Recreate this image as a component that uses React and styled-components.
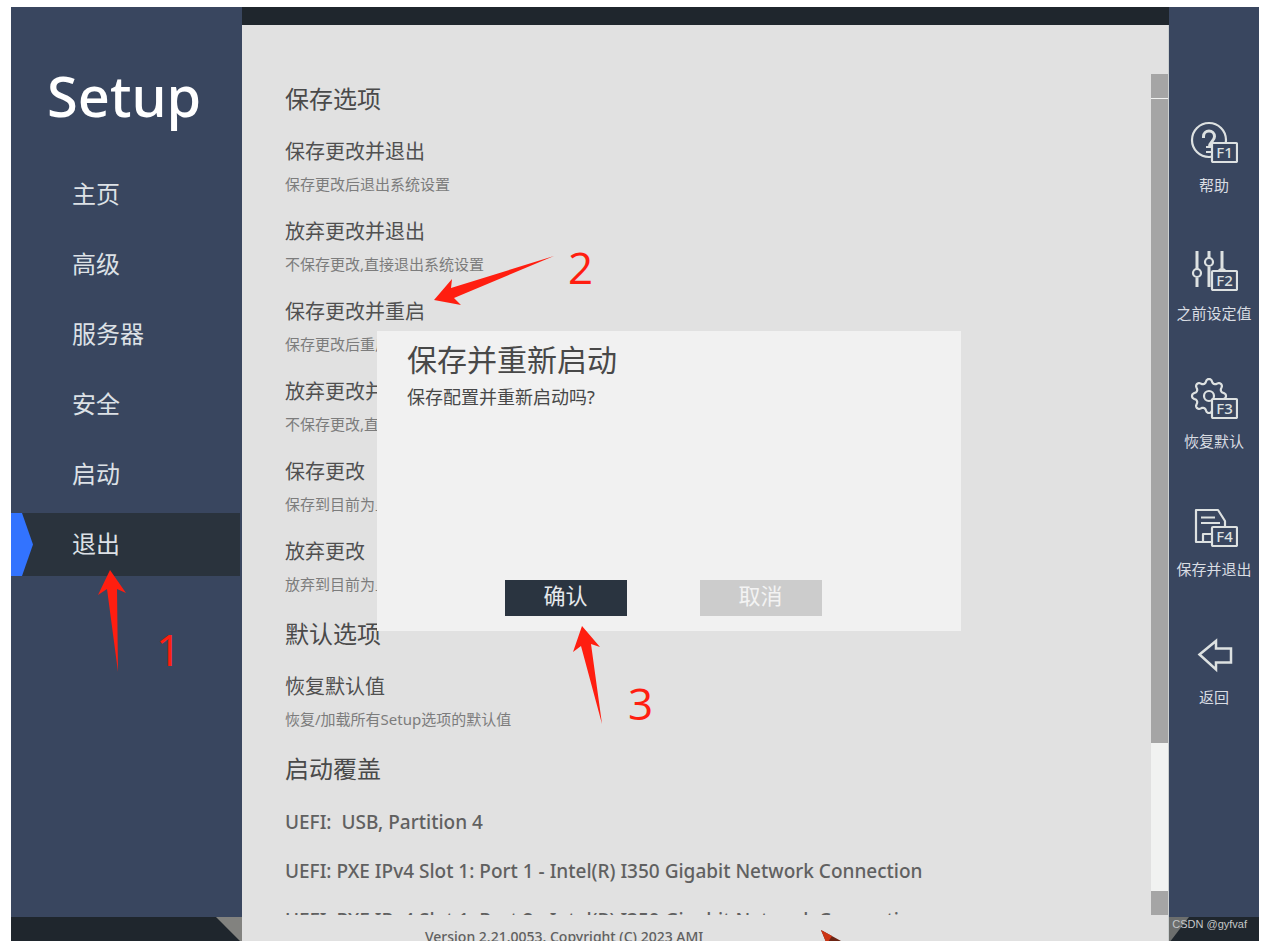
import React, { useState } from "react";
import styled, { createGlobalStyle } from "styled-components";

const GlobalStyle = createGlobalStyle`
  * {
    box-sizing: border-box;
  }
  body {
    margin: 0;
    background-color: white;
    font-family: "Noto Sans", "Noto Sans CJK SC", sans-serif;
    overflow: hidden;
  }
  button {
    border: none;
    padding: 0;
    background: none;
    font-family: inherit;
    cursor: pointer;
  }
`;

const Container = styled.div`
  height: 100vh;
  padding: 7px 4px 0 11px;
`;
const Screen = styled.div`
  position: relative;
  height: 100%;
  display: grid;
  grid-template-columns: 231px 1fr 90px;
  background-color: #1f262d;
`;

/* columns */
const Side = styled.div`
  display: flex;
  flex-direction: column;
  min-height: 0;
`;
const SidePanel = styled.div`
  flex: 1;
  background-color: #39465f;
`;
const SideFoot = styled.div`
  height: 24px;
  display: flex;
  justify-content: ${(props) => (props.$right ? "flex-start" : "flex-end")};
`;
const Fold = styled.div`
  width: ${(props) => (props.$right ? "20px" : "26px")};
  background-color: ${(props) => (props.$right ? "#6c6e6d" : "#82827f")};
  clip-path: ${(props) =>
    props.$right
      ? "polygon(0 0, 100% 0, 8% 100%, 0 100%)"
      : "polygon(0 0, 100% 0, 100% 100%, 92% 100%)"};
`;

/* left menu */
const Title = styled.h1`
  margin: 0;
  padding: 52px 0 0 36px;
  height: 156px;
  font-size: 56px;
  line-height: 72px;
  font-weight: 500;
  color: white;
`;
const Nav = styled.nav`
  display: flex;
  flex-direction: column;
  gap: 7px;
  padding-right: 2px;
`;
const NavLink = styled.a`
  height: 63px;
  display: flex;
  align-items: center;
  font-size: 24px;
  line-height: 60px;
  text-decoration: none;
  color: #dde1e6;
  background-color: ${(props) => (props.$active ? "#2a333d" : "transparent")};
  padding-bottom: 2px;
  &::before {
    content: "";
    width: 22px;
    height: 63px;
    margin: 0 39px -2px 0;
    background-color: ${(props) => (props.$active ? "#3273ff" : "transparent")};
    clip-path: polygon(0 0, 50% 0, 100% 50%, 50% 100%, 0 100%);
  }
`;

/* middle */
const Main = styled.main`
  position: relative;
  display: flex;
  flex-direction: column;
  min-width: 0;
  min-height: 0;
`;
const Panel = styled.div`
  flex: 1;
  min-height: 0;
  display: flex;
  flex-direction: column;
  margin-top: 18px;
  padding-top: 49px;
  background-color: #e1e1e1;
  border-right: 1px solid #ccd0d0;
`;
const Scroller = styled.div`
  flex: 1;
  min-height: 0;
  display: flex;
`;
const List = styled.div`
  flex: 1;
  overflow: hidden;
  padding: 7px 20px 0 43px;
`;
const Section = styled.section`
  margin-bottom: 22px;
`;
const Heading = styled.h2`
  margin: 0 0 21px;
  font-size: 24px;
  line-height: 36px;
  font-weight: 400;
  color: #4a4a4a;
`;
const Options = styled.div`
  display: flex;
  flex-direction: column;
  gap: ${(props) => (props.$compact ? "21px" : "24px")};
`;
const Option = styled.div`
  display: flex;
  flex-direction: column;
  align-items: flex-start;
  gap: 8px;
`;
const OptionButton = styled.button`
  font-size: ${(props) => (props.$latin ? "19px" : "20px")};
  font-weight: ${(props) => (props.$latin ? 500 : 400)};
  line-height: 28px;
  white-space: pre;
  color: ${(props) => (props.$latin ? "#606060" : "#505050")};
`;
const Hint = styled.p`
  margin: 0;
  font-size: 15px;
  line-height: 20px;
  color: #7c7c7c;
`;
const ScrollBar = styled.div`
  width: 17px;
  display: flex;
  flex-direction: column;
  background-color: #f1f2f1;
`;
const ScrollEnd = styled.div`
  height: 24px;
  background-color: #a5a5a5;
`;
const Thumb = styled.div`
  flex: 644;
  margin-top: 1px;
  background-color: #a5a5a5;
`;
const Track = styled.div`
  flex: 148;
`;
const Version = styled.footer`
  height: 26px;
  overflow: hidden;
  display: flex;
  gap: 118px;
  padding: 12px 0 0 183px;
  font-size: 14px;
  font-weight: 500;
  line-height: 20px;
  color: #606060;
`;
const Pointer = styled.svg`
  flex: none;
  width: 20px;
  height: 12px;
  margin-top: 3px;
`;

/* dialog */
const Dialog = styled.div`
  position: absolute;
  top: 324px;
  left: 135px;
  width: 63%;
  height: 300px;
  display: flex;
  flex-direction: column;
  padding: 8px 30px 15px;
  background-color: #f1f1f1;
`;
const DialogTitle = styled.h2`
  margin: 0;
  font-size: 30px;
  line-height: 42px;
  font-weight: 400;
  color: #484848;
`;
const DialogText = styled.p`
  flex: 1;
  margin: 2px 0 0;
  font-size: 18px;
  line-height: 28px;
  color: #484848;
`;
const Actions = styled.div`
  display: flex;
  justify-content: center;
  gap: 73px;
  padding-right: 12px;
`;
const ActionButton = styled.button`
  width: 122px;
  height: 36px;
  padding-bottom: 6px;
  font-size: 22px;
  line-height: 30px;
  color: ${(props) => (props.$primary ? "#e6e9ec" : "#f3f3f3")};
  background-color: ${(props) => (props.$primary ? "#2a3440" : "#cccccc")};
`;

/* right keys */
const Keys = styled.div`
  display: flex;
  flex-direction: column;
  gap: 64px;
  padding-top: 114px;
`;
const Key = styled.button`
  height: 64px;
  display: flex;
  flex-direction: column;
  align-items: center;
  gap: 12px;
  font-size: 15px;
  line-height: 20px;
  color: #d9dde3;
  white-space: nowrap;
`;
const Icon = styled.svg`
  flex: none;
  width: 48px;
  height: 42px;
  fill: none;
  stroke: #dde1e1;
  stroke-width: 2.2;
  stroke-linejoin: round;
`;
const BadgeText = styled.text`
  font-size: 15px;
  font-weight: 500;
  fill: #dde1e1;
  stroke: none;
`;
const Watermark = styled.span`
  position: absolute;
  right: 12px;
  bottom: 8px;
  font-family: "Liberation Sans", sans-serif;
  font-size: 11px;
  line-height: 18px;
  color: #c4c6c8;
`;

/* red marks drawn over the screen */
const Arrow = styled.svg`
  position: absolute;
  left: ${(props) => props.$x}px;
  top: ${(props) => props.$y}px;
  fill: #ff1e10;
  pointer-events: none;
`;
const Step = styled.span`
  position: absolute;
  left: ${(props) => props.$x}px;
  top: ${(props) => props.$y}px;
  font-family: "Open Sans", sans-serif;
  font-size: 44px;
  font-weight: 500;
  line-height: 48px;
  color: #ff1e10;
  pointer-events: none;
`;

const menu = ["主页", "高级", "服务器", "安全", "启动", "退出"];

const sections = [
  {
    title: "保存选项",
    options: [
      { name: "保存更改并退出", hint: "保存更改后退出系统设置" },
      { name: "放弃更改并退出", hint: "不保存更改,直接退出系统设置" },
      { name: "保存更改并重启", hint: "保存更改后重启系统" },
      { name: "放弃更改并重启", hint: "不保存更改,直接重启系统" },
      { name: "保存更改", hint: "保存到目前为止的更改" },
      { name: "放弃更改", hint: "放弃到目前为止的更改" },
    ],
  },
  {
    title: "默认选项",
    options: [{ name: "恢复默认值", hint: "恢复/加载所有Setup选项的默认值" }],
  },
  {
    title: "启动覆盖",
    latin: true,
    options: [
      { name: "UEFI:  USB, Partition 4" },
      {
        name: "UEFI: PXE IPv4 Slot 1: Port 1 - Intel(R) I350 Gigabit Network Connection",
      },
      {
        name: "UEFI: PXE IPv4 Slot 1: Port 2 - Intel(R) I350 Gigabit Network Connection",
      },
    ],
  },
];

// eight round teeth, one of them at the top
const gearPath = () => {
  let d = "";
  for (let i = 0; i < 96; i++) {
    const a = (i / 96) * Math.PI * 2;
    const wave = Math.cos(a * 8);
    const r = 15 + 2 * Math.sign(wave) * Math.pow(Math.abs(wave), 0.6);
    const x = 19 + r * Math.sin(a);
    const y = 19 - r * Math.cos(a);
    d += `${i ? "L" : "M"}${x.toFixed(2)} ${y.toFixed(2)}`;
  }
  return d + "Z";
};

const Badge = ({ label }) => (
  <>
    <rect x="22" y="22" width="25" height="19" rx="1" fill="#39465f" />
    <BadgeText x="34.5" y="37" textAnchor="middle">
      {label}
    </BadgeText>
  </>
);

const keys = [
  {
    name: "帮助",
    badge: "F1",
    icon: (
      <>
        <circle cx="19" cy="19" r="17" />
        <path
          d="M13.5 17v-1.500a5.500 5.500 0 0 1 11 0c0 5-5 4.500-5 10.500"
          strokeWidth="3"
        />
        <path d="M16 26h6M16 31h6" />
      </>
    ),
  },
  {
    name: "之前设定值",
    badge: "F2",
    icon: (
      <>
        <path d="M7 2v18M7 29v9M32 2v17" strokeWidth="3" />
        <path d="M19 2v7M19 18v20" strokeWidth="3" />
        <circle cx="7" cy="24" r="4" />
        <circle cx="19" cy="13" r="4" />
        <circle cx="32" cy="24" r="4" />
      </>
    ),
  },
  {
    name: "恢复默认",
    badge: "F3",
    icon: (
      <>
        <path d={gearPath()} />
        <circle cx="19" cy="19" r="5" />
      </>
    ),
  },
  {
    name: "保存并退出",
    badge: "F4",
    icon: (
      <>
        <path d="M6 5h22l7 11v21H6zM13 37v-8h12" />
        <path d="M11 12.500h14M11 18h19" />
      </>
    ),
  },
  {
    name: "返回",
    icon: (
      <path
        d="M9.500 21.500L26 8v7.500h15v14H26v7z"
        strokeWidth="2.500"
        strokeLinejoin="miter"
      />
    ),
  },
];

export default function App() {
  const [active, setActive] = useState("退出");
  const [open, setOpen] = useState(true);
  const handleClose = () => setOpen(false);
  return (
    <>
      <GlobalStyle />
      <Container>
        <Screen>
          <Side>
            <SidePanel>
              <Title>Setup</Title>
              <Nav>
                {menu.map((item) => (
                  <NavLink
                    key={item}
                    href="#"
                    $active={item === active}
                    onClick={() => setActive(item)}
                  >
                    {item}
                  </NavLink>
                ))}
              </Nav>
            </SidePanel>
            <SideFoot>
              <Fold />
            </SideFoot>
          </Side>

          <Main>
            <Panel>
              <Scroller>
                <List>
                  {sections.map((section) => (
                    <Section key={section.title}>
                      <Heading>{section.title}</Heading>
                      <Options $compact={section.latin}>
                        {section.options.map((option) => (
                          <Option key={option.name}>
                            <OptionButton
                              $latin={section.latin}
                              onClick={() => setOpen(true)}
                            >
                              {option.name}
                            </OptionButton>
                            {option.hint && <Hint>{option.hint}</Hint>}
                          </Option>
                        ))}
                      </Options>
                    </Section>
                  ))}
                </List>
                <ScrollBar>
                  <ScrollEnd />
                  <Thumb />
                  <Track />
                  <ScrollEnd />
                </ScrollBar>
              </Scroller>
              <Version>
                Version 2.21.0053. Copyright (C) 2023 AMI
                <Pointer viewBox="0 0 20 12">
                  <path d="M0 0L20 11V12H5z" fill="#6b2413" />
                  <path d="M0 0L11 6L7 12H5z" fill="#cc3414" />
                </Pointer>
              </Version>
            </Panel>
            {open && (
              <Dialog role="dialog" aria-labelledby="dialog-title">
                <DialogTitle id="dialog-title">保存并重新启动</DialogTitle>
                <DialogText>保存配置并重新启动吗?</DialogText>
                <Actions>
                  <ActionButton $primary onClick={handleClose}>
                    确认
                  </ActionButton>
                  <ActionButton onClick={handleClose}>取消</ActionButton>
                </Actions>
              </Dialog>
            )}
          </Main>

          <Side>
            <SidePanel>
              <Keys>
                {keys.map((key) => (
                  <Key key={key.name}>
                    <Icon viewBox="0 0 48 42">
                      {key.icon}
                      {key.badge && <Badge label={key.badge} />}
                    </Icon>
                    {key.name}
                  </Key>
                ))}
              </Keys>
            </SidePanel>
            <SideFoot $right>
              <Fold $right />
            </SideFoot>
          </Side>

          <Arrow $x={87} $y={563} width="28" height="103">
            <path d="M12 0L28 23L19 19L20 102L9 19L0 25z" />
          </Arrow>
          <Step $x={145} $y={618}>1</Step>
          <Arrow $x={423} $y={249} width="120" height="49">
            <path d="M0 44L18 23L17 32L120 0L20 42L27 49z" />
          </Arrow>
          <Step $x={557} $y={236}>2</Step>
          <Arrow $x={562} $y={619} width="29" height="98">
            <path d="M9 0L27 21L18 18L29 98L8 20L0 26z" />
          </Arrow>
          <Step $x={617} $y={672}>3</Step>
          <Watermark>CSDN @gyfvaf</Watermark>
        </Screen>
      </Container>
    </>
  );
}
